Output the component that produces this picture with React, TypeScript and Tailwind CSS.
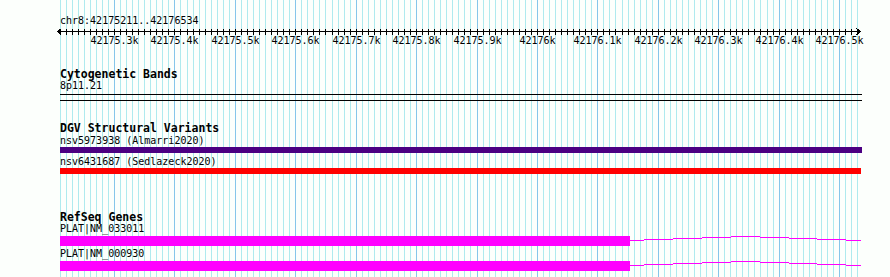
const START = 42175210;
const END = 42176530;
const toX = (bp: number) => Math.round(114 + (bp - 42175300) * 0.6042);

const gridBps: number[] = [];
for (let bp = START; bp <= END; bp += 10) gridBps.push(bp);

const labels = [
  "42175.3k", "42175.4k", "42175.5k", "42175.6k", "42175.7k", "42175.8k", "42175.9k",
  "42176k", "42176.1k", "42176.2k", "42176.3k", "42176.4k", "42176.5k"
];

// intron drawn as a coarse arc: [x1, x2, row offset from exon top]
const intron: [number, number, number][] = [
  [630, 644, 4],
  [644, 673, 3],
  [673, 702, 2],
  [702, 731, 1],
  [731, 760, 0],
  [760, 789, 1],
  [789, 817, 2],
  [817, 846, 3],
  [846, 861, 4]
];

function Grid() {
  return (
    <svg className="absolute inset-0" width={890} height={277} shapeRendering="crispEdges">
      {gridBps.map((bp) => (
        <rect
          key={bp}
          x={toX(bp)}
          y={0}
          width={1}
          height={277}
          fill={bp % 100 === 0 ? "#86c6ea" : "#aeeaee"}
        />
      ))}
    </svg>
  );
}

function Ruler() {
  return (
    <svg width={890} height={20} shapeRendering="crispEdges" className="block">
      <rect x={57} y={4} width={804} height={1} fill="#000" />
      {gridBps.map((bp) => (
        <rect key={bp} x={toX(bp)} y={2} width={1} height={6} fill="#000" />
      ))}
      <path d="M57.5 4.5 L61.5 1.5 M57.5 4.5 L61.5 7.5 M860.5 4.5 L856.5 1.5 M860.5 4.5 L856.5 7.5" stroke="#000" fill="none" />
      {labels.map((t, i) => (
        <text
          key={t}
          x={toX(42175300 + i * 100) + 0.5}
          y={17}
          textAnchor="middle"
          fontSize={10}
          fontFamily="'DejaVu Sans Mono', monospace"
          fill="#000"
        >
          {t}
        </text>
      ))}
    </svg>
  );
}

function Title({ children, className = "" }: { children: string; className?: string }) {
  return <div className={`pl-[60px] h-[12px] text-[11.5px] leading-[12px] font-bold ${className}`}>{children}</div>;
}

function Label({ children, className = "" }: { children: string; className?: string }) {
  return <div className={`pl-[60px] h-[12px] text-[10px] leading-[12px] whitespace-pre ${className}`}>{children}</div>;
}

function Gene() {
  return (
    <svg width={890} height={10} shapeRendering="crispEdges" className="block">
      <rect x={60} y={0} width={570} height={10} fill="#ff00ff" />
      {intron.map(([a, b, r]) => (
        <rect key={a} x={a} y={r} width={b - a} height={1} fill="#ff00ff" />
      ))}
    </svg>
  );
}

export default function App() {
  return (
    <div className="relative w-[890px] h-[277px] overflow-hidden bg-[#fcfffc] text-black font-['DejaVu_Sans_Mono',monospace]">
      <Grid />
      <div className="relative flex flex-col pt-[15px]">
        <Label>chr8:42175211..42176534</Label>
        <Ruler />

        <Title className="mt-[21px]">Cytogenetic Bands</Title>
        <Label>8p11.21</Label>
        <div className="ml-[60px] w-[802px] h-[7px] mt-[2px] border-y border-black" />

        <Title className="mt-[21px]">DGV Structural Variants</Title>
        <Label className="mt-[1px]">nsv5973938 (Almarri2020)</Label>
        <div className="ml-[60px] w-[802px] h-[6px] bg-[#4b0082]" />
        <Label className="mt-[3px]">nsv6431687 (Sedlazeck2020)</Label>
        <div className="ml-[60px] w-[801px] h-[6px] bg-[#ff0000]" />

        <Title className="mt-[37px]">RefSeq Genes</Title>
        <Label>PLAT|NM_033011</Label>
        <div className="mt-[1px]">
          <Gene />
        </div>
        <Label className="mt-[2px]">PLAT|NM_000930</Label>
        <div className="mt-[1px]">
          <Gene />
        </div>
      </div>
    </div>
  );
}
